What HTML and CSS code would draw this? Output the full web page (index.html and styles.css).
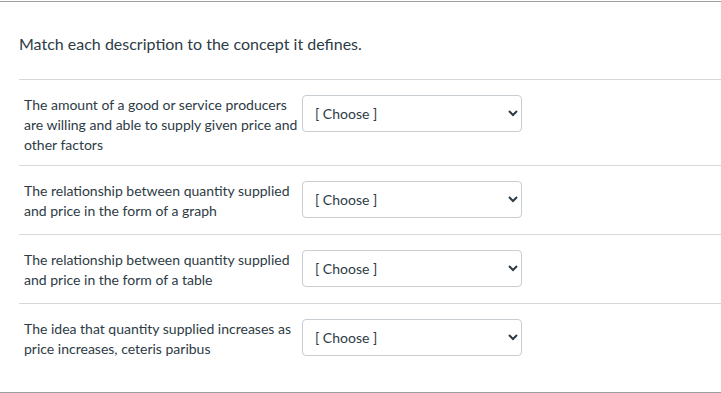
FILE: index.html
```html
<!DOCTYPE html>
<html lang="en">
<head>
  <meta charset="UTF-8">
  <meta name="viewport" content="width=device-width, initial-scale=1.0">
  <title>Matching question</title>
  <link rel="stylesheet" href="styles.css">
</head>
<body>
  <div class="question">
    <div class="question-text">Match each description to the concept it defines.</div>
    <div class="answers">
      <div class="answer">
        <div class="answer-left">The amount of a good or service producers are willing and able to supply given price and other factors</div>
        <div class="answer-right">
          <select class="match">
            <option>[ Choose ]</option>
            <option>Supply</option>
            <option>Supply curve</option>
            <option>Supply schedule</option>
            <option>Law of supply</option>
          </select>
        </div>
      </div>
      <div class="answer">
        <div class="answer-left">The relationship between quantity supplied and price in the form of a graph</div>
        <div class="answer-right">
          <select class="match">
            <option>[ Choose ]</option>
            <option>Supply</option>
            <option>Supply curve</option>
            <option>Supply schedule</option>
            <option>Law of supply</option>
          </select>
        </div>
      </div>
      <div class="answer">
        <div class="answer-left">The relationship between quantity supplied and price in the form of a table</div>
        <div class="answer-right">
          <select class="match">
            <option>[ Choose ]</option>
            <option>Supply</option>
            <option>Supply curve</option>
            <option>Supply schedule</option>
            <option>Law of supply</option>
          </select>
        </div>
      </div>
      <div class="answer">
        <div class="answer-left">The idea that quantity supplied increases as price increases, ceteris paribus</div>
        <div class="answer-right">
          <select class="match">
            <option>[ Choose ]</option>
            <option>Supply</option>
            <option>Supply curve</option>
            <option>Supply schedule</option>
            <option>Law of supply</option>
          </select>
        </div>
      </div>
    </div>
  </div>
</body>
</html>
```

FILE: styles.css
```css
body {
  margin: 0;
  background: #fff;
  font-family: Lato, "Noto Sans", sans-serif;
  color: #2d3b45;
}

.question {
  margin-top: 1px;
  border-top: 1px solid #9e9e9e;
  border-bottom: 1px solid #9e9e9e;
  padding: 0 0 20px 19px;
}

.question-text {
  font-size: 16px;
  line-height: 20px;
  padding: 32px 0 25px;
}

.answer {
  display: flex;
  align-items: flex-start;
  border-top: 1px solid #d8d8d8;
  padding: 15px 0 10px 5px;
  font-size: 14px;
  line-height: 20px;
}

.answer-left {
  width: 274px;
  margin-right: 4px;
}

.match {
  width: 220px;
  height: 37px;
  margin: 0 0 6px;
  padding: 0 8px;
  font-family: Lato, "Noto Sans", sans-serif;
  font-size: 14px;
  color: #2d3b45;
  background: #fff;
  border: 1px solid #c7cdd1;
  border-radius: 4px;
}
```
